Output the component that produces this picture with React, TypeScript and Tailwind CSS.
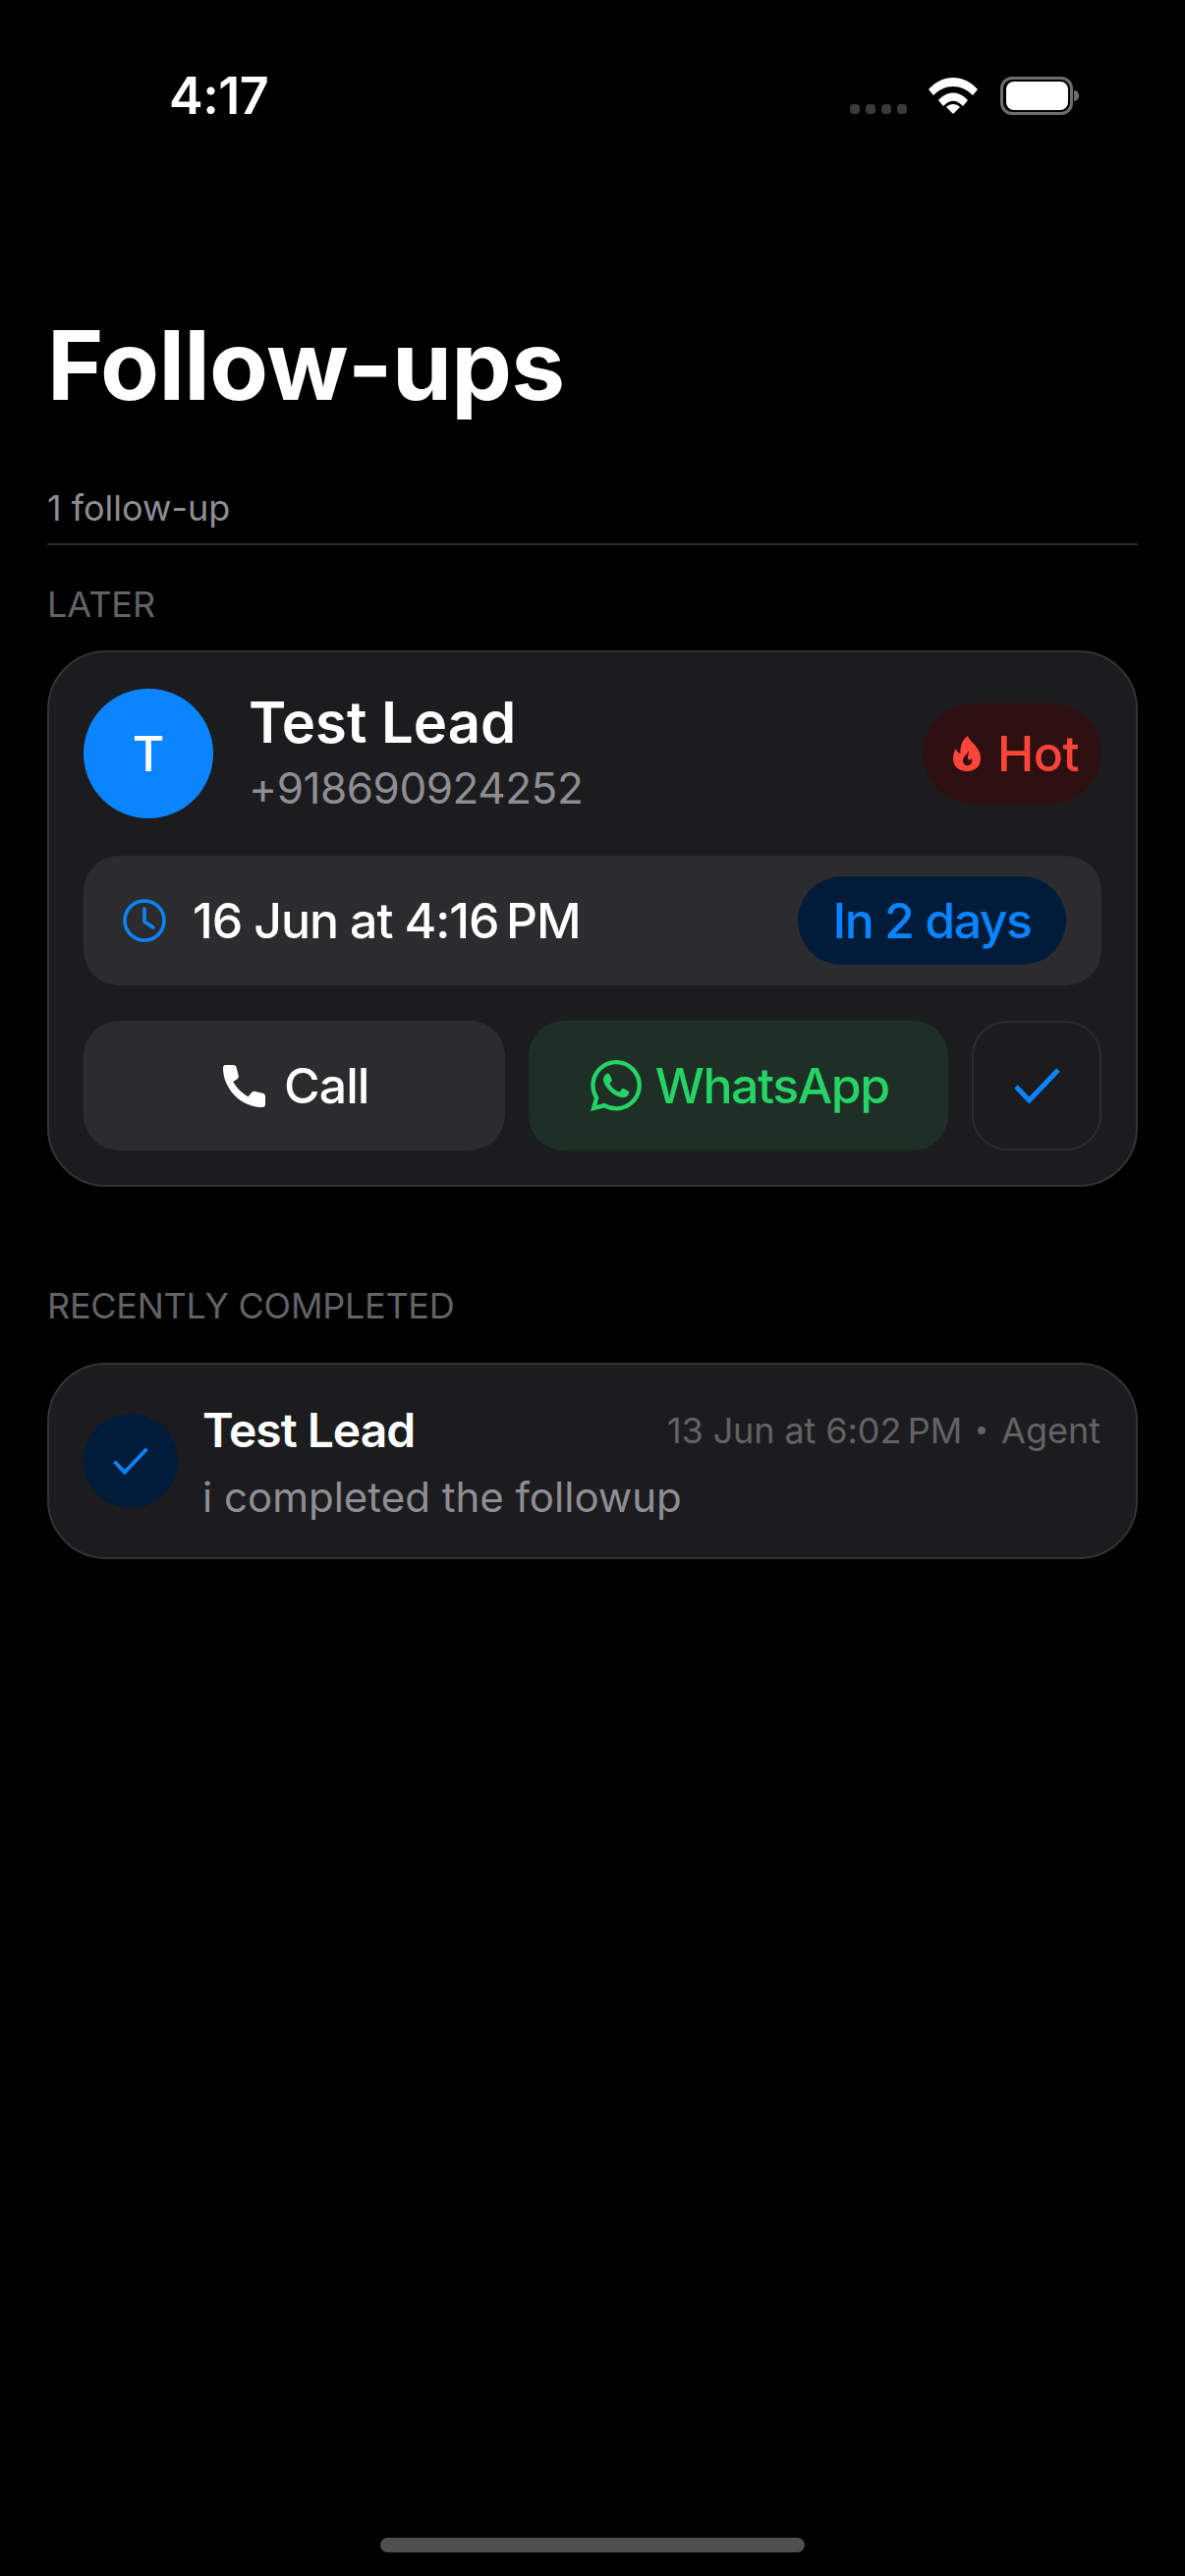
import React from "react";

const Check = ({ className }: { className: string }) => (
  <svg viewBox="0 0 47 36" className={className} fill="none">
    <path d="M2 19 L15.500 33 L45 2" stroke="#0a84ff" strokeWidth="5" />
  </svg>
);

export default function App() {
  return (
    <div className="relative flex h-[2622px] w-[1206px] flex-col overflow-hidden bg-black font-['Inter','Liberation_Sans',sans-serif] text-white">
      {/* Status bar */}
      <div className="flex h-[128px] items-start justify-between pl-[172px] pr-[114px] pt-[68px]">
        <span className="text-[52px] font-semibold leading-[60px] tracking-[-0.5px]">4:17</span>
        <div className="flex items-end pt-[10px]">
          <div className="mb-[1px] flex gap-[6px]">
            <span className="h-[10px] w-[10px] rounded-[4px] bg-[#3a3a3c]" />
            <span className="h-[10px] w-[10px] rounded-[4px] bg-[#3a3a3c]" />
            <span className="h-[10px] w-[10px] rounded-[4px] bg-[#3a3a3c]" />
            <span className="h-[10px] w-[10px] rounded-[4px] bg-[#3a3a3c]" />
          </div>
          <svg viewBox="0 0 50 37" className="mb-[1px] ml-[22px] h-[37px] w-[50px]" fill="white">
            <path d="M0 12 C14 -4 36 -4 50 12 L45 18 C33 6 17 6 5 18 Z" />
            <path d="M10 23 C19 13 31 13 40 23 L35 29 C28 22 22 22 15 29 Z" />
            <path d="M18 30 C22 26 28 26 32 30 L25 37 Z" />
          </svg>
          <div className="relative ml-[23px] flex h-[39px] w-[74px] items-center justify-center rounded-[12px] border-[3px] border-[#6e6e6e]">
            <div className="h-[29px] w-[63px] rounded-[8px] bg-white" />
            <div className="absolute right-[-9px] top-[11px] h-[11px] w-[5px] rounded-r-full bg-[#6e6e6e]" />
          </div>
        </div>
      </div>

      {/* Header */}
      <div className="mx-[48px] flex flex-col border-b-2 border-[#2c2c2e]">
        <h1 className="mt-[186px] text-[98px] font-bold leading-[116px] tracking-[-0.7px]">Follow-ups</h1>
        <p className="mt-[65px] pb-[14px] text-[36px] leading-[44px] text-[#8e8e93]">1 follow-up</p>
      </div>

      <div className="mx-[48px] mt-[38px] text-[36px] leading-[44px] text-[#636366]">LATER</div>

      {/* Lead card */}
      <div className="mx-[48px] mt-[25px] flex h-[546px] flex-col gap-[36px] rounded-[60px] border-2 border-[#333335] bg-[#1c1c1e] px-[35px] pt-[37px]">
        <div className="mb-[2px] flex h-[132px] items-center">
          <div className="flex h-[132px] w-[132px] items-center justify-center rounded-full bg-[#0a84ff] text-[50px] font-medium">T</div>
          <div className="ml-[36px] flex flex-1 flex-col">
            <span className="text-[58px] font-semibold leading-[70px]">Test Lead</span>
            <span className="text-[44px] leading-[64px] tracking-[-0.45px] text-[#8e8e93]">+918690924252</span>
          </div>
          <div className="flex h-[102px] w-[182px] items-center gap-[17px] rounded-full bg-[#2f1011] pl-[31px] text-[#ff453a]">
            <svg viewBox="0 0 28 36" className="h-[36px] w-[28px]" fill="#ff453a">
              <path fillRule="evenodd" d="M15 0 C16.500 6 28 11 28 23 C28 31 22 36 14 36 C6 36 0 31 0 23 C0 19.500 1 16 3 13 C3.500 15.500 5 17.500 7.500 18 C7 11 9 4 15 0 Z M15.500 15 C15 19 9.500 21 10 26 C10.500 29 13 31 16 30 C19 29 20 26 19 23 C18 24.500 16.500 25 15.500 24 C14 22 16.500 18 15.500 15 Z" />
            </svg>
            <span className="text-[50px] font-medium leading-none tracking-[-0.5px]">Hot</span>
          </div>
        </div>

        <div className="flex h-[132px] items-center justify-between rounded-[36px] bg-[#2c2c2e] pl-[40px] pr-[36px]">
          <div className="flex items-center">
            <svg viewBox="0 0 44 44" className="h-[44px] w-[44px]" fill="none" stroke="#0a84ff" strokeWidth="3.500">
              <circle cx="22" cy="22" r="20" />
              <path d="M22 10 V23 L31 29" strokeLinecap="round" />
            </svg>
            <span className="ml-[27px] text-[50px] font-medium leading-none tracking-[-1.1px]">16 Jun at 4:16{"\u202F"}PM</span>
          </div>
          <div className="flex h-[90px] w-[273px] items-center justify-center rounded-full bg-[#001c3a] text-[50px] font-medium tracking-[-1.5px] text-[#0a84ff]">In 2 days</div>
        </div>

        <div className="flex h-[132px] gap-[24px]">
          <div className="flex flex-1 items-center justify-center gap-[19px] rounded-[36px] bg-[#2c2c2e] pl-[4px]">
            <svg viewBox="0 0 44 44" className="h-[43px] w-[43px]" fill="white">
              <path d="M3 0 H11 C12.500 0 13.500 1 14 2.500 L16 11 C16.300 12.500 16 13.500 15 14.500 L10.500 17.500 C14 24 20 29.500 26 33 L30 28.500 C31 27.500 32 27.200 33.500 27.500 L41.500 29.500 C43 30 44 31 44 32.500 V41 C44 43 43 44 41 44 C18 44 0 24 0 3 C0 1 1 0 3 0 Z" />
            </svg>
            <span className="text-[50px] font-medium leading-none tracking-[-1px]">Call</span>
          </div>
          <div className="flex flex-1 items-center justify-center gap-[14px] rounded-[36px] bg-[#1e3026] pl-[3px] text-[#25d366]">
            <svg viewBox="0 0 24 24" className="h-[52px] w-[52px]" fill="#25d366">
              <path d="M17.472 14.382c-.297-.149-1.758-.867-2.03-.967-.273-.099-.471-.148-.67.15-.197.297-.767.966-.94 1.164-.173.199-.347.223-.644.075-.297-.15-1.255-.463-2.39-1.475-.883-.788-1.48-1.761-1.653-2.059-.173-.297-.018-.458.13-.606.134-.133.298-.347.446-.52.149-.174.198-.298.298-.497.099-.198.05-.371-.025-.52-.075-.149-.669-1.612-.916-2.207-.242-.579-.487-.5-.669-.51-.173-.008-.371-.01-.57-.01-.198 0-.52.074-.792.372-.272.297-1.04 1.016-1.04 2.479 0 1.462 1.065 2.875 1.213 3.074.149.198 2.096 3.2 5.077 4.487.709.306 1.262.489 1.694.625.712.227 1.36.195 1.871.118.571-.085 1.758-.719 2.006-1.413.248-.694.248-1.289.173-1.413-.074-.124-.272-.198-.57-.347m-5.421 7.403h-.004a9.870 9.870 0 01-5.031-1.378l-.361-.214-3.741.982.998-3.648-.235-.374a9.860 9.860 0 01-1.510-5.260c.001-5.450 4.436-9.884 9.888-9.884 2.640 0 5.122 1.030 6.988 2.898a9.825 9.825 0 012.893 6.994c-.003 5.450-4.437 9.884-9.885 9.884m8.413-18.297A11.815 11.815 0 0012.050 0C5.495 0 .160 5.335.157 11.892c0 2.096.547 4.142 1.588 5.945L.057 24l6.305-1.654a11.882 11.882 0 005.683 1.448h.005c6.554 0 11.890-5.335 11.893-11.893a11.821 11.821 0 00-3.480-8.413z" />
            </svg>
            <span className="text-[50px] font-medium leading-none tracking-[-1.4px]">WhatsApp</span>
          </div>
          <div className="flex w-[132px] shrink-0 items-center justify-center rounded-[36px] border-2 border-[#2c2c2e]">
            <Check className="h-[36px] w-[47px]" />
          </div>
        </div>
      </div>

      <div className="mx-[48px] mt-[99px] text-[36px] leading-[44px] tracking-[-0.25px] text-[#636366]">RECENTLY COMPLETED</div>

      {/* Completed card */}
      <div className="mx-[48px] mt-[36px] flex h-[200px] items-center rounded-[60px] border-2 border-[#333335] bg-[#1c1c1e] px-[35px]">
        <div className="flex h-[96px] w-[96px] shrink-0 items-center justify-center rounded-full bg-[#001c3a]">
          <Check className="h-[28px] w-[36px]" />
        </div>
        <div className="ml-[25px] flex flex-1 flex-col pt-[10px]">
          <div className="flex items-center justify-between">
            <span className="text-[48px] font-semibold leading-[64px] tracking-[-1px]">Test Lead</span>
            <div className="flex items-center pr-[1px] text-[36px] leading-none text-[#636366]">
              <span className="tracking-[-0.1px]">13 Jun at 6:02{"\u202F"}PM</span>
              <span className="mx-[16px] h-[8px] w-[8px] rounded-full bg-[#636366]" />
              <span>Agent</span>
            </div>
          </div>
          <span className="text-[42px] leading-[72px] text-[#8e8e93]">i completed the followup</span>
        </div>
      </div>

      {/* Home indicator */}
      <div className="absolute bottom-[24px] left-[387px] h-[15px] w-[432px] rounded-full bg-[#4f4f4f]" />
    </div>
  );
}
